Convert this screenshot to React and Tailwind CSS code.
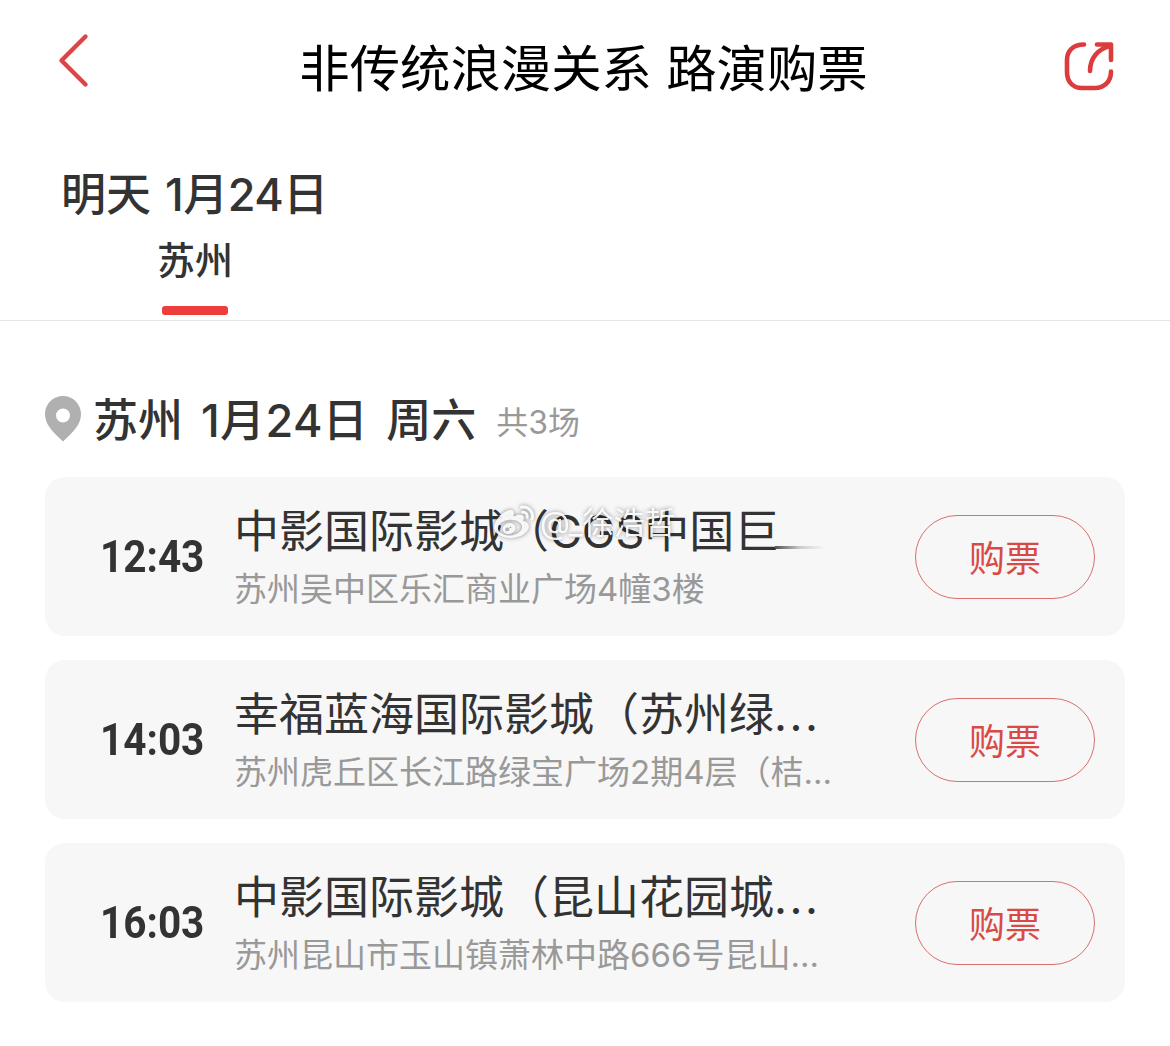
import React from "react";
import { FaWeibo } from "react-icons/fa";

const sessions = [
  {
    time: "12:43",
    cinema: "中影国际影城（CGS中国巨",
    address: "苏州吴中区乐汇商业广场4幢3楼",
    faded: true,
  },
  {
    time: "14:03",
    cinema: "幸福蓝海国际影城（苏州绿",
    address: "苏州虎丘区长江路绿宝广场2期4层（桔…",
  },
  {
    time: "16:03",
    cinema: "中影国际影城（昆山花园城",
    address: "苏州昆山市玉山镇萧林中路666号昆山…",
  },
];

const BackIcon = () => (
  <svg className="w-8 h-14" viewBox="0 0 32 56" fill="none">
    <path
      d="M27.5 4.5 L3.5 28.5 L27.5 52.5"
      stroke="#dc4446"
      strokeWidth="4.4"
      strokeLinecap="round"
      strokeLinejoin="round"
    />
  </svg>
);

const ShareIcon = () => (
  <svg className="w-[52px] h-[52px]" viewBox="0 0 52 52" fill="none">
    <g
      stroke="#dc3c3e"
      strokeWidth="4.6"
      strokeLinecap="round"
      strokeLinejoin="round"
    >
      <path d="M21 4.5 C10 4.5 4 11 4 20 V32 C4 42 10 48 19 48 H32 C41 48 48 42 48 31.5" />
      <path d="M34 4.5 H48 V20" />
      <path d="M47 6 C35 9 27 18 27 31" />
    </g>
  </svg>
);

const PinIcon = () => (
  <svg className="w-9 h-[46px]" viewBox="0 0 36 46">
    <path
      fill="#b0b0b0"
      fillRule="evenodd"
      d="M18 0 C8 0 0 8 0 18 C0 29 8 36 18 45.5 C28 36 36 29 36 18 C36 8 28 0 18 0 Z M18 12.5 A7 7 0 1 1 18 26.5 A7 7 0 1 1 18 12.5 Z"
    />
  </svg>
);

const Watermark = () => (
  <div className="absolute left-[449px] top-[25px] flex items-center text-white/90 drop-shadow-[0_0_2px_rgba(0,0,0,0.5)]">
    <FaWeibo className="w-10 h-[42px]" />
    <span className="ml-1.5 text-[31px] leading-10 whitespace-nowrap">
      @_徐浩哲
    </span>
  </div>
);

const SessionCard = ({ session }) => (
  <div className="relative flex items-center h-[159px] pr-[30px] rounded-[20px] bg-[#f7f7f7]">
    <div className="w-[189px] pl-[55px] shrink-0">
      <div className="origin-left scale-x-90 font-[Roboto] text-[45px] leading-none font-bold text-[#333]">
        {session.time}
      </div>
    </div>
    <div className="flex-1 min-w-0 pt-1 whitespace-nowrap">
      <div className="flex text-[45px] leading-[60px] text-[#333]">
        {session.cinema}
        {session.faded ? (
          <span className="self-end w-[50px] h-[3px] mb-[13px] -ml-1 bg-linear-to-r from-[#555] via-[#ccc] to-transparent" />
        ) : (
          <span className="tracking-[2.5px]">...</span>
        )}
      </div>
      <div className="text-[33px] leading-[54px] text-[#999]">
        {session.address}
      </div>
    </div>
    <button className="w-[180px] h-[84px] pt-[5px] shrink-0 rounded-full border-[1.5px] border-[#d9706c] text-[36px] text-[#d84a46]">
      购票
    </button>
    {session.faded && <Watermark />}
  </div>
);

const App = () => {
  return (
    <div className="w-[1170px] h-[1046px] bg-white overflow-hidden font-[Inter,'Noto_Sans_CJK_SC',sans-serif]">
      <header className="flex items-center justify-between h-[136px] pl-[58px] pr-[55px]">
        <div className="w-[46px] mb-4">
          <BackIcon />
        </div>
        <h1 className="mt-0.5 text-[50.4px] leading-none text-black whitespace-nowrap">
          非传统浪漫关系 路演购票
        </h1>
        <div className="mb-1">
          <ShareIcon />
        </div>
      </header>

      <div className="h-[185px] border-b border-[#e5e5e5] pl-[61px] text-[#333]">
        <div className="pt-[33px] text-[45px] leading-[52px] font-medium">
          明天 <span className="ml-0.5 -tracking-[0.5px]">1月24日</span>
        </div>
        <div className="w-[268px] flex flex-col items-center">
          <div className="mt-3.5 text-[38px] leading-[50px] font-medium">
            苏州
          </div>
          <div className="mt-[21px] w-[66px] h-[9px] rounded-[3px] bg-[#ee3e3b]" />
        </div>
      </div>

      <main className="px-[45px]">
        <div className="flex items-center h-[156px] pt-10 text-[#333]">
          <PinIcon />
          <h2 className="mt-[3px] ml-3 flex text-[45px] font-medium">
            <span>苏州</span>
            <span className="ml-[18px] tracking-[0.4px]">1月24日</span>
            <span className="ml-[18px]">周六</span>
          </h2>
          <span className="ml-5 mt-[7px] text-[32px] text-[#999]">共3场</span>
        </div>
        <div className="flex flex-col gap-6">
          {sessions.map((session) => (
            <SessionCard key={session.time} session={session} />
          ))}
        </div>
      </main>
    </div>
  );
};

export default App;
